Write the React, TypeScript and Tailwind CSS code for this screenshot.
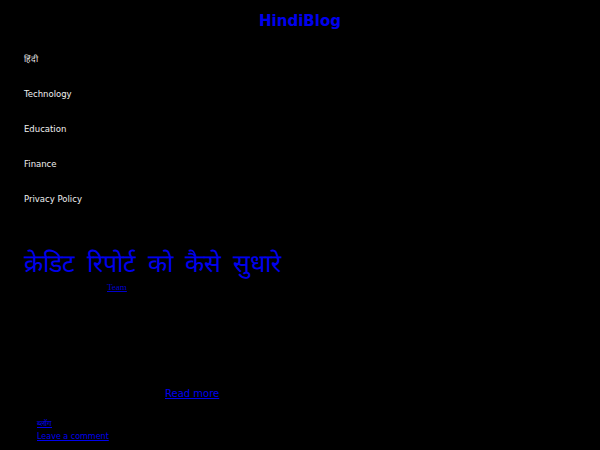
import React from 'react'

const navItems = ['हिंदी', 'Technology', 'Education', 'Finance', 'Privacy Policy']

export default function App() {
  return (
    <div className="min-h-[450px] w-full bg-black" style={{ fontFamily: '"DejaVu Sans", sans-serif' }}>
      {/* site title */}
      <header className="pt-[9px] text-center">
        <a href="#" className="text-[15px] font-bold leading-[18px] text-[#0000ee] no-underline">
          HindiBlog
        </a>
      </header>

      {/* menu */}
      <nav className="mt-[20px] px-6">
        <ul className="flex flex-col gap-[23px]">
          {navItems.map((item) => (
            <li key={item} className="text-[8.5px] leading-[12px] text-[#f0f0f0]">
              {item}
            </li>
          ))}
        </ul>
      </nav>

      {/* post */}
      <article className="mt-[44px] px-6">
        <h1 className="text-[25px] leading-[30px] text-[#0000ee] [word-spacing:4px]">
          क्रेडिट रिपोर्ट को कैसे सुधारे
        </h1>
        <div className="mt-[2px] pl-[83px] text-[9px] leading-[12px]" style={{ fontFamily: '"Liberation Serif", serif' }}>
          <a href="#" className="text-[#0000cc] underline">Team</a>
        </div>

        <div className="mt-[94px] pl-[141px] text-[10px] leading-[14px]">
          <a href="#" className="text-[#0000ee] underline">Read more</a>
        </div>

        <div className="mt-[16px] flex flex-col pl-[13px] text-[8px] leading-[13px]">
          <a href="#" className="text-[#0000ee] underline">ब्लॉग</a>
          <a href="#" className="text-[#0000ee] underline">Leave a comment</a>
        </div>
      </article>
    </div>
  )
}
